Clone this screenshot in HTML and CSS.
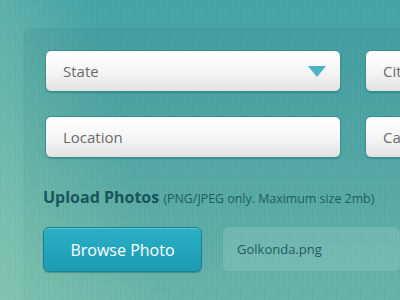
FILE: index.html
```html
<!DOCTYPE html>
<html lang="en">
<head>
    <meta charset="UTF-8">
    <meta name="viewport" content="width=device-width, initial-scale=1.0">
    <title>Add Place</title>
    <link rel="stylesheet" href="styles.css">
</head>
<body>
    <div class="panel">
        <div class="field-grid">
            <div class="field select">
                <span>State</span>
                <svg class="caret" width="18" height="12" viewBox="0 0 18 12"><path d="M0 0 H18 L9 11 Z" fill="#4fb3c8"/></svg>
            </div>
            <div class="field"><span>City</span></div>
            <div class="field"><span>Location</span></div>
            <div class="field"><span>Category</span></div>
        </div>

        <h2 class="upload-title">Upload Photos <small>(PNG/JPEG only. Maximum size 2mb)</small></h2>

        <div class="upload-row">
            <button type="button" class="browse-btn">Browse Photo</button>
            <div class="file-name">Golkonda.png</div>
        </div>
    </div>
</body>
</html>
```

FILE: styles.css
```css
html, body {
    margin: 0;
    height: 300px;
    overflow: hidden;
}
body {
    font-family: "Open Sans", sans-serif;
    background:
        repeating-linear-gradient(90deg, rgba(0, 0, 0, 0.035) 0 1px, transparent 1px 3px),
        linear-gradient(75deg, rgba(150, 210, 180, 0.55) 0%, rgba(150, 210, 180, 0) 35%),
        linear-gradient(180deg, #47a5a8 0%, #55acaa 45%, #6cb8ad 100%);
}
.panel {
    margin: 28px 0 0 23px;
    padding: 22px 0 0 22px;
    height: 300px;
    border-radius: 8px 0 0 0;
    background: linear-gradient(180deg, rgba(0, 70, 80, 0.08) 0%, rgba(0, 70, 80, 0.02) 100%);
}
.field-grid {
    display: grid;
    grid-template-columns: 296px 296px;
    column-gap: 24px;
    row-gap: 24px;
}
.field {
    height: 42px;
    box-sizing: border-box;
    display: flex;
    align-items: center;
    justify-content: space-between;
    padding: 0 14px 0 17px;
    border-radius: 6px;
    border: 1px solid #3a8f94;
    background: linear-gradient(180deg, #ffffff 0%, #f4f4f4 55%, #e2e2e2 100%);
    box-shadow: 0 1px 1px rgba(0, 60, 70, 0.25);
    color: #6a6a6a;
    font-size: 15px;
}
.caret {
    display: block;
    margin-top: 1px;
}
.upload-title {
    margin: 28px 0 0 -2px;
    color: #17555a;
    font-size: 16px;
    font-weight: 700;
}
.upload-title small {
    font-size: 12.4px;
    font-weight: 400;
    color: #1d5d62;
}
.upload-row {
    display: flex;
    margin: 19px 0 0 -2px;
    gap: 21px;
}
.browse-btn {
    width: 159px;
    height: 45px;
    border: 1px solid #1a7f92;
    border-radius: 6px;
    background: linear-gradient(180deg, #2ab0c6 0%, #1e9bb3 100%);
    box-shadow: inset 0 1px 0 rgba(255, 255, 255, 0.25), 0 1px 1px rgba(0, 50, 60, 0.3);
    color: #fff;
    font-family: "Open Sans", sans-serif;
    font-size: 16px;
    cursor: pointer;
}
.file-name {
    flex: 1;
    height: 44px;
    display: flex;
    align-items: center;
    padding-left: 14px;
    border-radius: 6px;
    background: rgba(255, 255, 255, 0.12);
    color: #1d5d62;
    font-size: 13px;
}
```
